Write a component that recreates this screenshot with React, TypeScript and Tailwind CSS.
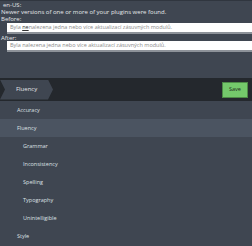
import React from 'react';

const subItems = ['Grammar', 'Inconsistency', 'Spelling', 'Typography', 'Unintelligible'];

const App: React.FC = () => {
  return (
    <div className="w-[252px] h-[246px] overflow-hidden bg-[#3f4651] text-[#e4e6e9] font-['Open_Sans',sans-serif] border-t border-[#30363f]">
      <div className="h-[48px] text-[6px] leading-[7px]">
        <div className="pl-[3px] pt-[1px]">en-US:</div>
        <div className="pl-[1px]">Newer versions of one or more of your plugins were found.</div>
        <div className="pl-[1px] h-[6px]">Before:</div>
        <div className="mt-[1px] ml-[7px] h-[11px] bg-white border-b-2 border-[#8d9299] pl-[3px] text-[5.5px] leading-[9px] text-[#8a8a8a] whitespace-nowrap overflow-hidden">
          Byla <span className="underline text-[#333]">ne</span>nalezena jedna nebo více aktualizací zásuvných modulů.
        </div>
        <div className="pl-[1px] pt-[1px] h-[7px] leading-[6px]">After:</div>
        <div className="ml-[7px] h-[11px] bg-white border-b-2 border-[#8d9299] pl-[3px] text-[5.5px] leading-[9px] text-[#8a8a8a] whitespace-nowrap overflow-hidden">
          Byla nalezena jedna nebo více aktualizací zásuvných modulů.
        </div>
      </div>

      <div className="mt-[29px] h-[23px] bg-[#24282d] flex items-center justify-between pr-[4px]">
        <div className="w-[53px] h-[20px] bg-[#3f4651] [clip-path:polygon(0_0,48px_0,53px_50%,48px_100%,0_100%,5px_50%)] flex items-center pl-[16px] text-[6px]">
          Fluency
        </div>
        <button className="w-[26px] h-[16px] bg-[#74c96b] border border-[#4d8a47] text-[#1e2a1c] text-[5.5px] leading-none">
          Save
        </button>
      </div>

      <div className="text-[5.5px] text-[#dde0e4]">
        <div className="h-[18px] flex items-center pl-[17px]">Accuracy</div>
        <div className="h-[18px] flex items-center pl-[17px] bg-[#4b5461]">Fluency</div>
        {subItems.map((item) => (
          <div key={item} className="h-[18px] flex items-center pl-[23px]">
            {item}
          </div>
        ))}
        <div className="h-[18px] flex items-center pl-[17px]">Style</div>
      </div>
    </div>
  );
};

export default App;
